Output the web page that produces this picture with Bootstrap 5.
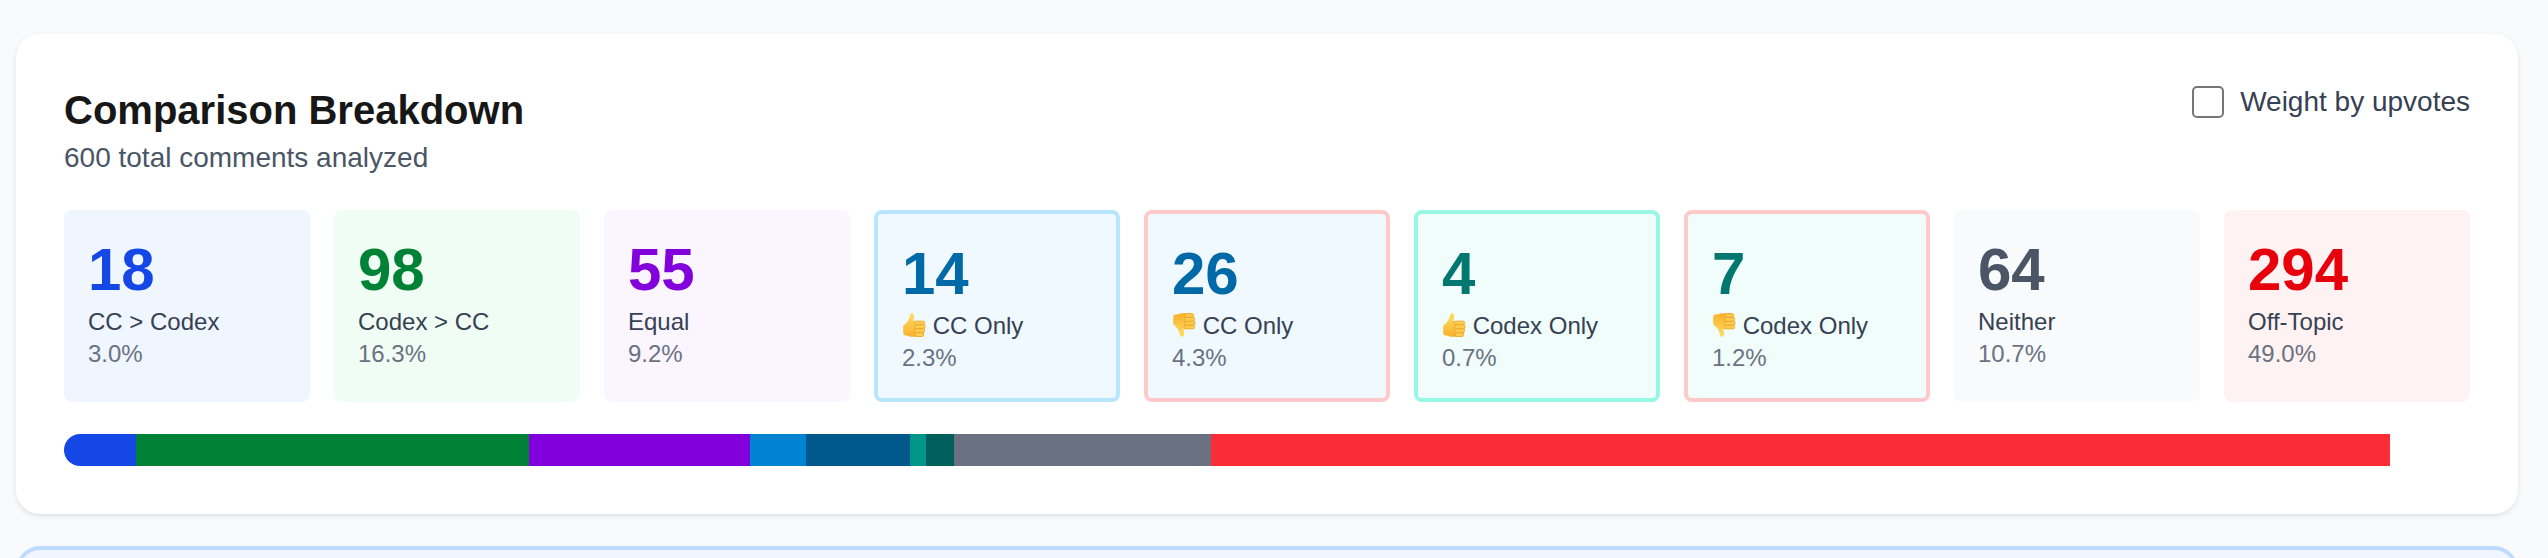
<!DOCTYPE html>
<html lang="en">
<head>
  <meta charset="UTF-8">
  <meta name="viewport" content="width=device-width, initial-scale=1.0">
  <title>Comparison Breakdown</title>
  <link href="https://cdn.jsdelivr.net/npm/bootstrap@5.3.0/dist/css/bootstrap.min.css" rel="stylesheet">
  <style>
    html, body { height: 100%; overflow: hidden; }
    body {
      background: #f9fafb;
      font-family: "Liberation Sans", Arial, sans-serif;
      color: #364153;
    }
    .page-wrap { padding: 34px 30px 0 16px; }
    .panel {
      background: #fff;
      border: 0;
      border-radius: 24px;
      padding: 48px;
      margin-bottom: 32px;
      box-shadow: 0 2px 6px rgba(0,0,0,.08), 0 2px 4px -2px rgba(0,0,0,.08);
    }
    .panel-title { font-size: 40px; line-height: 56px; font-weight: 700; color: #171717; margin: 0; }
    .panel-sub { font-size: 28px; line-height: 40px; color: #4a5565; margin: 0; }
    .weight-toggle { font-size: 28px; line-height: 40px; color: #364153; }
    .weight-toggle .form-check-input {
      width: 32px; height: 32px; margin: 0;
      border: 2px solid #767676; border-radius: 5px; box-shadow: none;
    }
    .tile-grid { display: grid; grid-template-columns: repeat(9, 1fr); gap: 24px; margin: 32px 0; }
    .tile { border-radius: 8px; padding: 24px; }
    .tile-num { font-size: 60px; line-height: 72px; font-weight: 700; }
    .tile-label { font-size: 24px; line-height: 32px; color: #364153; white-space: nowrap; }
    .tile-pct { font-size: 24px; line-height: 32px; color: #6a7282; }
    .tile-outline { border: 4px solid; }
    .thumb { width: 24px; height: 24px; vertical-align: -3px; }

    .t-blue { background: #eff6ff; } .t-blue .tile-num { color: #1447e6; }
    .t-green { background: #f0fdf4; } .t-green .tile-num { color: #008236; }
    .t-purple { background: #faf5ff; } .t-purple .tile-num { color: #8200db; }
    .t-sky { background: #f0f9ff; } .t-sky .tile-num { color: #0069a8; }
    .t-teal { background: #f0fdfa; } .t-teal .tile-num { color: #00786f; }
    .t-gray { background: #f9fafb; } .t-gray .tile-num { color: #4a5565; }
    .t-red { background: #fef2f2; } .t-red .tile-num { color: #e7000b; }
    .b-sky { border-color: #b8e6fe; }
    .b-red { border-color: #ffc9c9; }
    .b-teal { border-color: #96f7e4; }

    .split-bar { height: 32px; border-radius: 16px; background: #fff; }
    .split-bar .progress-bar { transition: none; }
    .s1 { background: #1447e6; } .s2 { background: #008236; } .s3 { background: #8200db; }
    .s4 { background: #0084d1; } .s5 { background: #00598a; } .s6 { background: #009689; }
    .s7 { background: #005f5a; } .s8 { background: #6a7282; } .s9 { background: #fb2c36; }

    .next-panel { height: 60px; background: #eff6ff; border: 4px solid #bedbff; border-radius: 24px; }
  </style>
</head>
<body>
  <svg width="0" height="0" class="position-absolute">
    <defs>
      <linearGradient id="thumbFill" x1="0" y1="0" x2="0" y2="1">
        <stop offset="0" stop-color="#ffdf66"/>
        <stop offset="1" stop-color="#f9b02a"/>
      </linearGradient>
      <symbol id="thumbUp" viewBox="0 0 24 24">
        <path d="M1.200 12.800c1.800-1.500 3.600-3.100 5-5.500 .9-1.500 1.300-2.800 1.500-4.200C7.900 1.400 8.800.2 10.100.2c1.600 0 2.300 1.700 2.100 3.500-.2 1.500-.7 2.900-1 4.300h8.300c1.500 0 2 1 2 2v11.500c0 1.300-1 2.300-2.300 2.300H9.500c-1.600 0-2.400-.8-4-1.100-1.300-.2-2.900-.2-3.500-.7-.7-.6-1-5-.8-9.500z" fill="url(#thumbFill)"/>
        <g fill="#fecb4d" stroke="#e59a22" stroke-width=".6">
          <rect x="12" y="8" width="10.800" height="3.900" rx="1.900"/>
          <rect x="12.500" y="11.900" width="10.800" height="3.900" rx="1.900"/>
          <rect x="12.500" y="15.800" width="10.300" height="3.900" rx="1.900"/>
          <rect x="13" y="19.700" width="8.800" height="3.800" rx="1.800"/>
        </g>
      </symbol>
    </defs>
  </svg>

  <div class="page-wrap">
    <div class="card panel">
      <div class="d-flex justify-content-between align-items-start">
        <div>
          <h2 class="panel-title">Comparison Breakdown</h2>
          <p class="panel-sub">600 total comments analyzed</p>
        </div>
        <label class="weight-toggle d-flex align-items-center gap-3">
          <input class="form-check-input" type="checkbox">
          <span>Weight by upvotes</span>
        </label>
      </div>

      <div class="tile-grid">
        <div class="tile t-blue">
          <div class="tile-num">18</div>
          <div class="tile-label">CC &gt; Codex</div>
          <div class="tile-pct">3.0%</div>
        </div>
        <div class="tile t-green">
          <div class="tile-num">98</div>
          <div class="tile-label">Codex &gt; CC</div>
          <div class="tile-pct">16.3%</div>
        </div>
        <div class="tile t-purple">
          <div class="tile-num">55</div>
          <div class="tile-label">Equal</div>
          <div class="tile-pct">9.2%</div>
        </div>
        <div class="tile tile-outline t-sky b-sky">
          <div class="tile-num">14</div>
          <div class="tile-label"><svg class="thumb"><use href="#thumbUp"/></svg> CC Only</div>
          <div class="tile-pct">2.3%</div>
        </div>
        <div class="tile tile-outline t-sky b-red">
          <div class="tile-num">26</div>
          <div class="tile-label"><svg class="thumb"><use href="#thumbUp" transform="matrix(1 0 0 -1 0 24)"/></svg> CC Only</div>
          <div class="tile-pct">4.3%</div>
        </div>
        <div class="tile tile-outline t-teal b-teal">
          <div class="tile-num">4</div>
          <div class="tile-label"><svg class="thumb"><use href="#thumbUp"/></svg> Codex Only</div>
          <div class="tile-pct">0.7%</div>
        </div>
        <div class="tile tile-outline t-teal b-red">
          <div class="tile-num">7</div>
          <div class="tile-label"><svg class="thumb"><use href="#thumbUp" transform="matrix(1 0 0 -1 0 24)"/></svg> Codex Only</div>
          <div class="tile-pct">1.2%</div>
        </div>
        <div class="tile t-gray">
          <div class="tile-num">64</div>
          <div class="tile-label">Neither</div>
          <div class="tile-pct">10.7%</div>
        </div>
        <div class="tile t-red">
          <div class="tile-num">294</div>
          <div class="tile-label">Off-Topic</div>
          <div class="tile-pct">49.0%</div>
        </div>
      </div>

      <div class="progress split-bar">
        <div class="progress-bar s1" style="width: 3%"></div>
        <div class="progress-bar s2" style="width: 16.3333%"></div>
        <div class="progress-bar s3" style="width: 9.1667%"></div>
        <div class="progress-bar s4" style="width: 2.3333%"></div>
        <div class="progress-bar s5" style="width: 4.3333%"></div>
        <div class="progress-bar s6" style="width: .6667%"></div>
        <div class="progress-bar s7" style="width: 1.1667%"></div>
        <div class="progress-bar s8" style="width: 10.6667%"></div>
        <div class="progress-bar s9" style="width: 49%"></div>
      </div>
    </div>

    <div class="next-panel"></div>
  </div>

  <script src="https://cdn.jsdelivr.net/npm/bootstrap@5.3.0/dist/js/bootstrap.bundle.min.js"></script>
</body>
</html>
